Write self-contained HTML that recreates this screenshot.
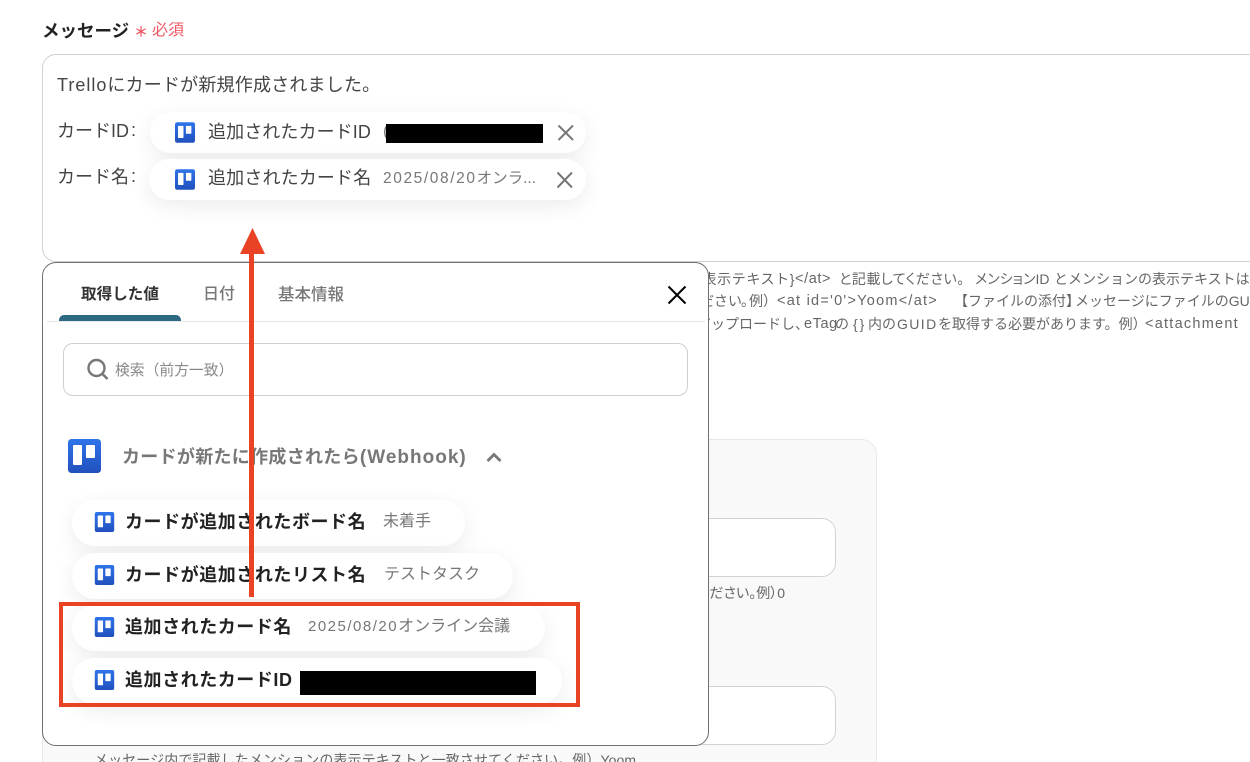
<!DOCTYPE html>
<html lang="ja"><head><meta charset="utf-8"><title>メッセージ</title>
<style>
*{box-sizing:border-box}
html,body{margin:0;padding:0;background:#fff}
#w{width:1250px;height:762px;overflow:hidden;position:relative;font-family:"Liberation Sans","Noto Sans CJK JP",sans-serif;color:#333}
.a{position:absolute;white-space:nowrap}
.chip{position:absolute;background:#fff;border-radius:24px;box-shadow:0 6px 22px rgba(0,0,0,.08)}
.b{font-weight:700;color:#222;font-size:18px;line-height:24px;letter-spacing:.55px}
.v{font-size:16px;line-height:24px;color:#777}
.d{font-size:15px;letter-spacing:1.5px}
.help{font-size:14px;line-height:20px;color:#666}
.p{font-feature-settings:"palt"}
.l{font-size:14.5px;letter-spacing:1.250px}
.t{font-size:18px;line-height:24px;color:#444}
</style></head><body><div id="w">
<svg width="0" height="0" style="position:absolute"><defs>
<linearGradient id="g" x1="0" y1="0" x2="0" y2="1"><stop offset="0" stop-color="#2f74ea"/><stop offset="1" stop-color="#2150bd"/></linearGradient>
<symbol id="t" viewBox="0 0 33 34"><rect width="33" height="34" rx="3.5" fill="url(#g)"/><rect x="5" y="6" width="9" height="20" rx="1" fill="#fff"/><rect x="18" y="6" width="9" height="13" rx="1" fill="#fff"/></symbol>
</defs></svg>

<div class="a" style="left:42px;top:19px;font-size:17.500px;line-height:24px;font-weight:700;color:#222">メッセージ</div>
<div class="a" style="left:134px;top:20px;font-size:14px;line-height:24px;font-weight:700;color:#ef5a64">＊</div>
<div class="a" style="left:152px;top:19px;font-size:16px;line-height:24px;color:#ef5a64">必須</div>

<div class="a" style="left:42px;top:54px;width:1260px;height:208px;border:1px solid #cdd2d8;border-radius:14px;background:#fff"></div>
<div class="a t" style="left:57px;top:73px;letter-spacing:.2px"><span style="letter-spacing:1px">Trello</span>にカードが新規作成されました。</div>
<div class="a t" style="left:57px;top:119px">カードID</div>
<div class="a t" style="left:131px;top:118px">:</div>
<div class="a t" style="left:57px;top:165px">カード名</div>
<div class="a t" style="left:131px;top:164px">:</div>

<div class="chip" style="left:150px;top:112px;width:436px;height:41px"></div>
<div class="chip" style="left:149px;top:159px;width:437px;height:41px"></div>
<svg class="a" style="left:175px;top:122px" width="20" height="21"><use href="#t"/></svg>
<svg class="a" style="left:175px;top:169px" width="20" height="21"><use href="#t"/></svg>
<div class="a t" style="left:208px;top:120px;letter-spacing:.1px">追加されたカードID</div>
<div class="a t" style="left:208px;top:166px;letter-spacing:.15px">追加されたカード名</div>
<div class="a" style="left:383px;top:167px;font-size:15.500px;line-height:24px;color:#777"><span style="letter-spacing:1.600px">2025/08/20</span>オンラ...</div>
<div class="a v" style="left:383px;top:120px">(</div>
<div class="a" style="left:386px;top:124px;width:157px;height:19px;background:#000"></div>
<svg class="a" style="left:557px;top:124px" width="18" height="17"><path d="M1.500 1.500L16 16M16 1.500L1.500 16" stroke="#777" stroke-width="2" fill="none"/></svg>
<svg class="a" style="left:556px;top:171px" width="18" height="18"><path d="M1.500 1.500L16 16.500M16 1.500L1.500 16.500" stroke="#777" stroke-width="2" fill="none"/></svg>

<div class="a help" style="right:455px;top:269px;letter-spacing:.6px">{表示テキスト}</div>
<div class="a help l" style="left:795px;top:269px;letter-spacing:.6px">&lt;/at&gt;</div>
<div class="a help p" style="left:839px;top:269px;letter-spacing:.5px">と記載してください。</div>
<div class="a help p" style="left:975px;top:269px">メンションID</div>
<div class="a help" style="left:1054px;top:269px">とメンションの表示テキストは</div>

<div class="a help" style="right:508px;top:291px">ください</div>
<div class="a help" style="left:741px;top:291px">。</div>
<div class="a help" style="left:749px;top:291px">例）</div>
<div class="a help l" style="left:777px;top:291px">&lt;at id='0'&gt;Yoom&lt;/at&gt;</div>
<div class="a help" style="left:954px;top:291px">【ファイルの添付】</div>
<div class="a help" style="left:1075px;top:291px">メッセージにファイルのGU</div>

<div class="a help" style="right:441px;top:314px">アップロードし、</div>
<div class="a help l" style="left:804px;top:314px;letter-spacing:.6px">eTag</div>
<div class="a help" style="left:835px;top:314px">の</div>
<div class="a help" style="left:853px;top:314px;letter-spacing:2px">{}</div>
<div class="a help" style="left:868px;top:314px">内の</div>
<div class="a help" style="left:897px;top:314px;letter-spacing:1.400px">GUID</div>
<div class="a help" style="left:938px;top:314px">を取得する必要があります。例）</div>
<div class="a help l" style="left:1145px;top:314px">&lt;attachment</div>

<div class="a" style="left:42px;top:439px;width:835px;height:340px;background:#f9f9fa;border:1px solid #e6e8eb;border-radius:16px"></div>
<div class="a" style="left:100px;top:518px;width:736px;height:59px;background:#fff;border:1px solid #cfd4da;border-radius:14px"></div>
<div class="a" style="left:100px;top:686px;width:736px;height:59px;background:#fff;border:1px solid #cfd4da;border-radius:14px"></div>
<div class="a help p" style="right:465px;top:583px">ください。例）0</div>
<div class="a help" style="left:94px;top:750px;letter-spacing:.1px">メッセージ内で記載したメンションの表示テキストと一致させてください。例）Yoom</div>

<div class="a" style="left:42px;top:262px;width:667px;height:484px;background:#fff;border:1px solid #6f6f6f;border-radius:14px"></div>
<div class="a" style="left:81px;top:283px;font-size:15.600px;line-height:24px;font-weight:700;color:#333">取得した値</div>
<div class="a" style="left:203px;top:283px;font-size:16px;line-height:24px;color:#777;font-weight:500">日付</div>
<div class="a" style="left:278px;top:283px;font-size:16.500px;line-height:24px;color:#777;font-weight:500">基本情報</div>
<div class="a" style="left:59px;top:315px;width:122px;height:6px;background:#2d6a82;border-radius:5px 5px 0 0"></div>
<div class="a" style="left:47px;top:321px;width:658px;height:1px;background:#e6e6e6"></div>
<svg class="a" style="left:667px;top:285px" width="20" height="20"><path d="M1.500 1.500L18.500 18.500M18.500 1.500L1.500 18.500" stroke="#000" stroke-width="2" fill="none"/></svg>

<div class="a" style="left:63px;top:343px;width:625px;height:53px;border:1px solid #cfcfcf;border-radius:10px"></div>
<svg class="a" style="left:86px;top:358px" width="24" height="24"><circle cx="10.500" cy="10" r="8" stroke="#777" stroke-width="2.400" fill="none"/><path d="M16 15.500L21.500 21" stroke="#777" stroke-width="2.600" fill="none"/></svg>
<div class="a" style="left:115px;top:359px;font-size:14.800px;line-height:24px;color:#888">検索（前方一致）</div>

<svg class="a" style="left:68px;top:439px" width="33" height="34"><use href="#t"/></svg>
<div class="a" style="left:122px;top:445px;font-size:18px;line-height:24px;font-weight:700;color:#777;letter-spacing:.3px">カードが新たに作成されたら<span style="font-size:19px;letter-spacing:1px">(Webhook)</span></div>
<svg class="a" style="left:486px;top:451px" width="16" height="12"><path d="M1.500 10L8 3.500L14.500 10" stroke="#777" stroke-width="2.800" fill="none"/></svg>

<div class="chip" style="left:72px;top:500px;width:393px;height:46px"></div>
<div class="chip" style="left:72px;top:553px;width:441px;height:46px"></div>
<div class="chip" style="left:72px;top:605px;width:473px;height:46px"></div>
<div class="chip" style="left:72px;top:658px;width:490px;height:46px"></div>
<svg class="a" style="left:94px;top:512px" width="21" height="20"><use href="#t"/></svg>
<svg class="a" style="left:94px;top:565px" width="21" height="20"><use href="#t"/></svg>
<svg class="a" style="left:94px;top:617px" width="21" height="20"><use href="#t"/></svg>
<svg class="a" style="left:94px;top:670px" width="21" height="20"><use href="#t"/></svg>
<div class="a b" style="left:125px;top:510px">カードが追加されたボード名</div>
<div class="a b" style="left:125px;top:563px">カードが追加されたリスト名</div>
<div class="a b" style="left:125px;top:615px">追加されたカード名</div>
<div class="a b" style="left:125px;top:668px">追加されたカードID</div>
<div class="a v" style="left:383px;top:510px">未着手</div>
<div class="a v" style="left:384px;top:563px">テストタスク</div>
<div class="a v" style="left:308px;top:615px"><span class="d">2025/08/20</span>オンライン会議</div>
<div class="a" style="left:300px;top:671px;width:236px;height:24px;background:#000"></div>

<div class="a" style="left:249px;top:250px;width:4.500px;height:347px;background:#ea4224"></div>
<svg class="a" style="left:240px;top:228px" width="25" height="26"><path d="M12.500 0L25 26H0Z" fill="#ea4224"/></svg>
<div class="a" style="left:59px;top:602px;width:521px;height:105px;border:4.500px solid #ea4224"></div>
</div></body></html>
